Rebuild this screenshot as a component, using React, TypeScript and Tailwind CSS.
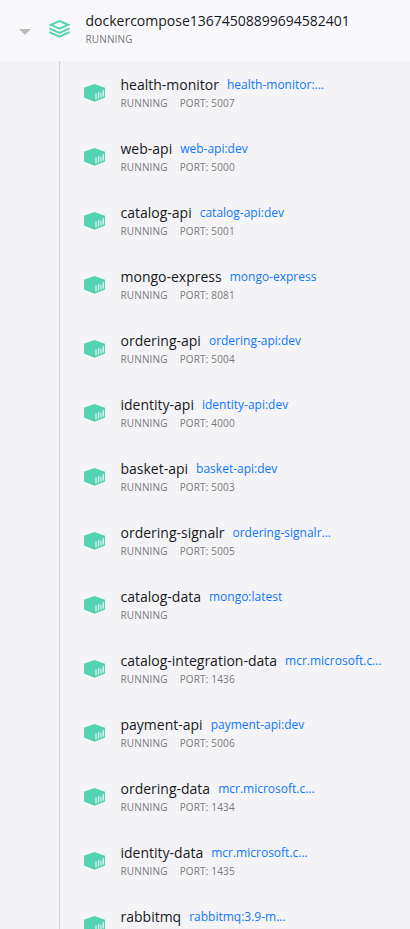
const items: [string, string, string][] = [
  ['health-monitor', 'health-monitor:...', '5007'],
  ['web-api', 'web-api:dev', '5000'],
  ['catalog-api', 'catalog-api:dev', '5001'],
  ['mongo-express', 'mongo-express', '8081'],
  ['ordering-api', 'ordering-api:dev', '5004'],
  ['identity-api', 'identity-api:dev', '4000'],
  ['basket-api', 'basket-api:dev', '5003'],
  ['ordering-signalr', 'ordering-signalr...', '5005'],
  ['catalog-data', 'mongo:latest', ''],
  ['catalog-integration-data', 'mcr.microsoft.c...', '1436'],
  ['payment-api', 'payment-api:dev', '5006'],
  ['ordering-data', 'mcr.microsoft.c...', '1434'],
  ['identity-data', 'mcr.microsoft.c...', '1435'],
];

function StackIcon() {
  return (
    <svg width="22" height="20" viewBox="0 0 22 20" fill="none" stroke="#55d2b1" strokeWidth="2">
      <path d="M10.5 2 19.2 5.8l-8.7 3.9L1.8 5.8z" />
      <path d="m.4 9.4 10.1 4.4 10.1-4.4" />
      <path d="m.4 13.2 10.1 4.5 10.1-4.5" />
    </svg>
  );
}

function ContainerIcon() {
  return (
    <svg width="22" height="20" viewBox="0 0 22 20">
      <path d="M0 4.8 10.5 1 21 4.8v9.6l-10.5 4.4L0 14.4z" fill="#55d2b1" />
      <path d="M12 10.4v6.2M14.6 9v6.6M17 9.8v4.8M19.3 7.2v6.4" stroke="#f4f4f6" strokeOpacity=".85" strokeWidth="1.3" />
    </svg>
  );
}

function Row({ name, image, port, status = true }: { name: string; image: string; port?: string; status?: boolean }) {
  return (
    <div className="flex h-16 pl-6 pt-[14px]">
      <div className="w-[36.5px] shrink-0 pt-2"><ContainerIcon /></div>
      <div>
        <div className="flex items-baseline gap-2 whitespace-nowrap leading-[20px]">
          <span className="text-[14px] text-[#17191e]">{name}</span>
          <span className="relative -top-px text-[12px] text-[#0f76ff]">{image}</span>
        </div>
        {status && (
          <div className="-mt-px flex gap-3 text-[10px] leading-[16px] tracking-[0.15px] text-[#77787c]">
            <span>RUNNING</span>
            {port && <span>PORT: {port}</span>}
          </div>
        )}
      </div>
    </div>
  );
}

export default function App() {
  return (
    <div className="h-[929px] w-[410px] overflow-hidden bg-[#f4f4f6] font-['Open_Sans',sans-serif]">
      <header className="flex h-[61px] bg-[#f9f9fb]">
        <div className="pl-[19px] pt-[29px]">
          <svg width="12" height="6" viewBox="0 0 12 6"><path d="M0 0h12L6 6z" fill="#bcbcbc" /></svg>
        </div>
        <div className="pl-[18px] pt-[19px]"><StackIcon /></div>
        <div className="pl-[14.5px] pt-[11px]">
          <div className="text-[14px] leading-[20px] text-[#17191e]">dockercompose13674508899694582401</div>
          <div className="text-[10px] leading-[16px] tracking-[0.15px] text-[#77787c]">RUNNING</div>
        </div>
      </header>
      <main className="ml-[59px] border-l border-[#d0d0d4]">
        {items.map(([name, image, port]) => (
          <Row key={name} name={name} image={image} port={port} />
        ))}
        <Row name="rabbitmq" image="rabbitmq:3.9-m..." status={false} />
      </main>
    </div>
  );
}
